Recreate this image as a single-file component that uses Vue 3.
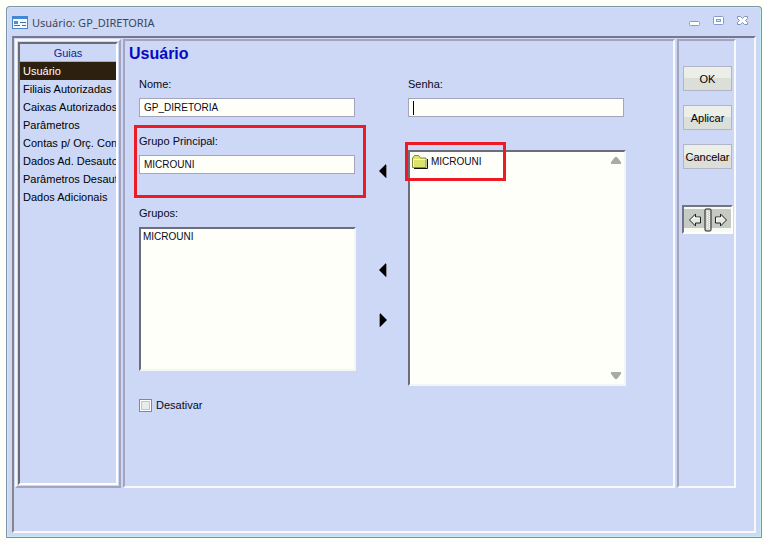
<script setup>
import { ref } from 'vue'

const tabs = [
  'Usuário',
  'Filiais Autorizadas',
  'Caixas Autorizados',
  'Parâmetros',
  'Contas p/ Orç. Contábil',
  'Dados Ad. Desautorizados',
  'Parâmetros Desautorizados',
  'Dados Adicionais',
]
const active = ref('Usuário')
const nome = ref('GP_DIRETORIA')
const senha = ref('')
const grupoPrincipal = ref('MICROUNI')
const grupos = ref(['MICROUNI'])
const disponiveis = ref(['MICROUNI'])
const desativar = ref(false)
</script>

<template>
  <div class="desktop">
    <section class="window">
      <header class="titlebar">
        <svg class="app-icon" width="16" height="13" viewBox="0 0 16 13">
          <rect x="0.5" y="0.5" width="15" height="12" fill="#f4faff" stroke="#4c86c6" />
          <rect x="0" y="0" width="16" height="3" fill="#4388d2" />
          <rect x="2" y="5" width="4" height="3" fill="#528fc9" />
          <path d="M2 9.500h6M10 9.500h4M8 6.500h6" stroke="#3d70a8" />
        </svg>
        <h1>Usuário: GP_DIRETORIA</h1>
        <div class="controls">
          <button type="button" aria-label="Minimizar">
            <svg width="12" height="12" viewBox="0 0 12 12">
              <rect x="0.5" y="6.5" width="10" height="4" rx="1" fill="#fff" stroke="#839cce" />
            </svg>
          </button>
          <button type="button" aria-label="Maximizar">
            <svg width="12" height="12" viewBox="0 0 12 12">
              <rect x="0.5" y="1.5" width="10" height="8" rx="1" fill="#fff" stroke="#839cce" />
              <rect x="3.5" y="4.5" width="4" height="2" fill="#dce6fa" stroke="#839cce" />
            </svg>
          </button>
          <button type="button" aria-label="Fechar">
            <svg width="12" height="12" viewBox="0 0 12 12">
              <path d="M.5 1.500h3l2 2 2-2h3v2l-2 2 2 2v2h-3l-2-2-2 2h-3v-2l2-2-2-2z" fill="#fff" stroke="#8193c0" />
            </svg>
          </button>
        </div>
      </header>

      <div class="client">
        <nav class="sidebar">
          <div class="sidebar-list">
            <h2>Guias</h2>
            <button
              v-for="tab in tabs"
              :key="tab"
              type="button"
              class="tab"
              :class="{ active: tab === active }"
              @click="active = tab"
            >{{ tab }}</button>
          </div>
        </nav>

        <main class="panel">
          <h2 class="heading">Usuário</h2>
          <form class="form" @submit.prevent>
            <div class="column">
              <div class="field">
                <label for="nome">Nome:</label>
                <input id="nome" v-model="nome" type="text" />
              </div>
              <div class="field main-group">
                <label for="grupo">Grupo Principal:</label>
                <input id="grupo" v-model="grupoPrincipal" type="text" />
                <span class="highlight"></span>
              </div>
              <div class="field groups">
                <span id="grupos-label">Grupos:</span>
                <ul class="list" aria-labelledby="grupos-label">
                  <li v-for="g in grupos" :key="g">{{ g }}</li>
                </ul>
              </div>
              <label class="check">
                <input v-model="desativar" type="checkbox" />
                Desativar
              </label>
            </div>

            <div class="arrows">
              <button type="button" class="arrow first" aria-label="Definir grupo principal">
                <svg width="8" height="14" viewBox="0 0 8 14"><path d="M7 0v14L0 7z" /><path d="M7.500 1v13" stroke="#8c8c98" /></svg>
              </button>
              <button type="button" class="arrow second" aria-label="Adicionar grupo">
                <svg width="8" height="14" viewBox="0 0 8 14"><path d="M7 0v14L0 7z" /><path d="M7.500 1v13" stroke="#8c8c98" /></svg>
              </button>
              <button type="button" class="arrow third" aria-label="Remover grupo">
                <svg width="8" height="14" viewBox="0 0 8 14"><path d="M1 0v14l7-7z" /><path d="M.5 1v13" stroke="#8c8c98" /></svg>
              </button>
            </div>

            <div class="column">
              <div class="field">
                <label for="senha">Senha:</label>
                <div class="password">
                  <input id="senha" v-model="senha" type="text" />
                  <span class="caret"></span>
                </div>
              </div>
              <div class="list available">
                <ul>
                  <li v-for="g in disponiveis" :key="g">
                    <svg width="16" height="14" viewBox="0 0 16 14">
                      <path d="M2 13.500h13.500V4" fill="none" stroke="#111" />
                      <path d="M.5 12.500V3L2.500.5h4l2 2.500h5.500v9.500z" fill="#dbe36a" stroke="#87893d" />
                      <path d="M1.500 4.500h12" stroke="#f8fac4" />
                      <path d="M1.500 5v7" stroke="#f8fac4" />
                    </svg>
                    {{ g }}
                  </li>
                </ul>
                <div class="scroll">
                  <button type="button" aria-label="Rolar para cima">
                    <svg width="10" height="7" viewBox="0 0 10 7"><path d="M0 7V5l4-5h2l4 5v2z" /></svg>
                  </button>
                  <button type="button" aria-label="Rolar para baixo">
                    <svg width="10" height="7" viewBox="0 0 10 7"><path d="M0 0v2l4 5h2l4-5V0z" /></svg>
                  </button>
                </div>
                <span class="highlight"></span>
              </div>
            </div>
          </form>
        </main>

        <aside class="panel actions">
          <button type="button" class="action">OK</button>
          <button type="button" class="action">Aplicar</button>
          <button type="button" class="action">Cancelar</button>
          <div class="pager">
            <button type="button" aria-label="Anterior">
              <svg width="14" height="14" viewBox="0 0 14 14">
                <path d="M1.500 7 7.500 1v3h5v6h-5v3z" fill="#e6e8e2" stroke="#222" />
                <path d="M3 7l3.500-3.500V5H11.500" fill="none" stroke="#fff" />
              </svg>
            </button>
            <svg class="grip" width="8" height="24" viewBox="0 0 8 24">
              <rect x="1" y="1" width="6" height="22" rx="1" fill="#d4d7d0" stroke="#222" />
              <path d="M3.500 3v18M5.500 4v17" stroke="#fff" stroke-dasharray="1 1" />
            </svg>
            <button type="button" aria-label="Próximo">
              <svg width="14" height="14" viewBox="0 0 14 14">
                <path d="M12.500 7 6.500 1v3h-5v6h5v3z" fill="#e6e8e2" stroke="#222" />
                <path d="M2.500 9V5h5V3.500" fill="none" stroke="#fff" />
              </svg>
            </button>
          </div>
        </aside>
      </div>
    </section>
  </div>
</template>

<style>
body {
  background: #fffffa;
}
</style>

<style scoped>
* {
  box-sizing: border-box;
}
h1, h2, ul {
  margin: 0;
  padding: 0;
  list-style: none;
}
button {
  padding: 0;
  border: 0;
  background: none;
  font: inherit;
  color: inherit;
}
svg {
  display: block;
}
.desktop {
  display: flex;
  min-height: 100vh;
  padding: 6px 2px 4px 6px;
  font: 11px/16px "Liberation Sans", Arial, sans-serif;
  color: #08081c;
}
.window {
  display: flex;
  flex-direction: column;
  flex: 1;
  min-width: 0;
  padding: 0 5px 4px;
  border: 1px solid #7d96a5;
  border-bottom-color: #8089a8;
  border-radius: 4px 4px 1px 1px;
  background: #ccd8f5;
  box-shadow: inset 0 0 0 1px #c5ebf5;
}
.titlebar {
  display: flex;
  align-items: center;
  height: 29px;
  padding: 2px 7px 0 0;
}
.titlebar h1 {
  flex: 1;
  margin-left: 4px;
  font: 11px/16px "Noto Sans", "Open Sans", sans-serif;
  color: #3c4660;
}
.controls {
  display: flex;
  gap: 12px;
  padding-bottom: 3px;
}
.client {
  display: grid;
  grid-template-columns: 106px minmax(0, 1fr) 59px;
  gap: 2px;
  flex: 1;
  padding: 1px 18px 43px 1px;
  border: 2px solid;
  border-color: #77768c #f6f8f6 #fafaf4 #85858a;
}
.sidebar {
  display: flex;
  padding: 1px;
  border: 2px solid;
  border-color: #f4f7ff #a4a4c0 #a4a4c0 #f4f7ff;
}
.sidebar-list {
  flex: 1;
  min-width: 0;
  border: 2px solid;
  border-color: #6c6c74 #fff #fff #6c6c74;
}
.sidebar h2 {
  height: 18px;
  border-bottom: 1px solid #a8acc0;
  font: 11px/18px "Liberation Sans", Arial, sans-serif;
  text-align: center;
  color: #1a1a9c;
}
.tab {
  display: block;
  width: 100%;
  height: 18px;
  padding-left: 3px;
  overflow: hidden;
  line-height: 18px;
  text-align: left;
  white-space: nowrap;
  color: #000;
}
.tab.active {
  background: #2e200e;
  color: #fff;
}
.panel {
  border: 2px solid;
  border-color: #a4a4c0 #f8faff #f8faff #a4a4c0;
}
.heading {
  padding-left: 4px;
  font-size: 16px;
  line-height: 25px;
  color: #0808c4;
}
.form {
  display: grid;
  grid-template-columns: 217fr 52fr 218fr;
  padding: 10px 47px 0 14px;
}
.field {
  display: flex;
  flex-direction: column;
  gap: 6px;
  position: relative;
}
input[type="text"] {
  width: calc(100% - 1px);
  height: 19px;
  padding: 0 4px;
  border: 1px solid #a4a4bc;
  background: #fffffa;
  font: 10px/16px "Liberation Sans", Arial, sans-serif;
  color: #08081c;
  outline: 0;
}
.main-group {
  margin-top: 16px;
}
.groups {
  margin-top: 31px;
}
.highlight {
  position: absolute;
  border: 3px solid #ed1c24;
  pointer-events: none;
}
.main-group .highlight {
  inset: -8px -10px -24px -5px;
}
.available .highlight {
  top: -10px;
  left: -5px;
  width: 101px;
  height: 39px;
}
.list {
  min-height: 144px;
  border: 2px solid;
  border-color: #6c6c7c #f4f6f2 #f4f6f2 #6c6c7c;
  background: #fffffa;
  font-size: 10px;
}
.list li {
  padding-left: 2px;
}
.check {
  display: flex;
  align-items: center;
  gap: 4px;
  height: 14px;
  margin-top: 27px;
}
.check input {
  appearance: none;
  width: 13px;
  height: 13px;
  margin: 0;
  border: 1px solid #7788a8;
  background: #e6ebec;
  box-shadow: inset 0 0 0 1px #fff, inset 0 0 0 2px #bccac8;
}
.arrows {
  display: flex;
  flex-direction: column;
  align-items: center;
  padding-left: 2px;
}
.arrow {
  height: 14px;
}
.first {
  margin-top: 88px;
}
.second {
  margin-top: 85px;
}
.third {
  margin-top: 36px;
}
.password {
  display: flex;
  align-items: center;
  position: relative;
  margin-right: 1px;
}
.caret {
  position: absolute;
  left: 5px;
  width: 1px;
  height: 14px;
  background: #000;
}
.available {
  display: flex;
  justify-content: space-between;
  position: relative;
  min-height: 236px;
  margin-top: 33px;
}
.available li {
  display: flex;
  align-items: center;
  gap: 3px;
  padding-top: 2px;
}
.scroll {
  display: flex;
  flex-direction: column;
  justify-content: space-between;
  padding: 5px 3px;
  fill: #a8aca6;
}
.actions {
  display: flex;
  flex-direction: column;
  align-items: center;
  gap: 14px;
  padding: 25px 0 0 2px;
}
.action {
  width: 49px;
  height: 25px;
  border: 1px solid #b4b4c8;
  background: linear-gradient(#eceee8 48%, #dcdfd8 48%);
  color: #000;
}
.pager {
  display: flex;
  align-items: center;
  justify-content: center;
  width: 51px;
  height: 29px;
  margin-top: 22px;
  border: 2px solid;
  border-color: #747484 #fffffa #fffffa #747484;
  background: linear-gradient(#f8faf4 2px, #c6cac4 2px, #c6cac4 21px, #f8faf4 21px);
}
.pager button {
  padding: 0 2px;
}
</style>
